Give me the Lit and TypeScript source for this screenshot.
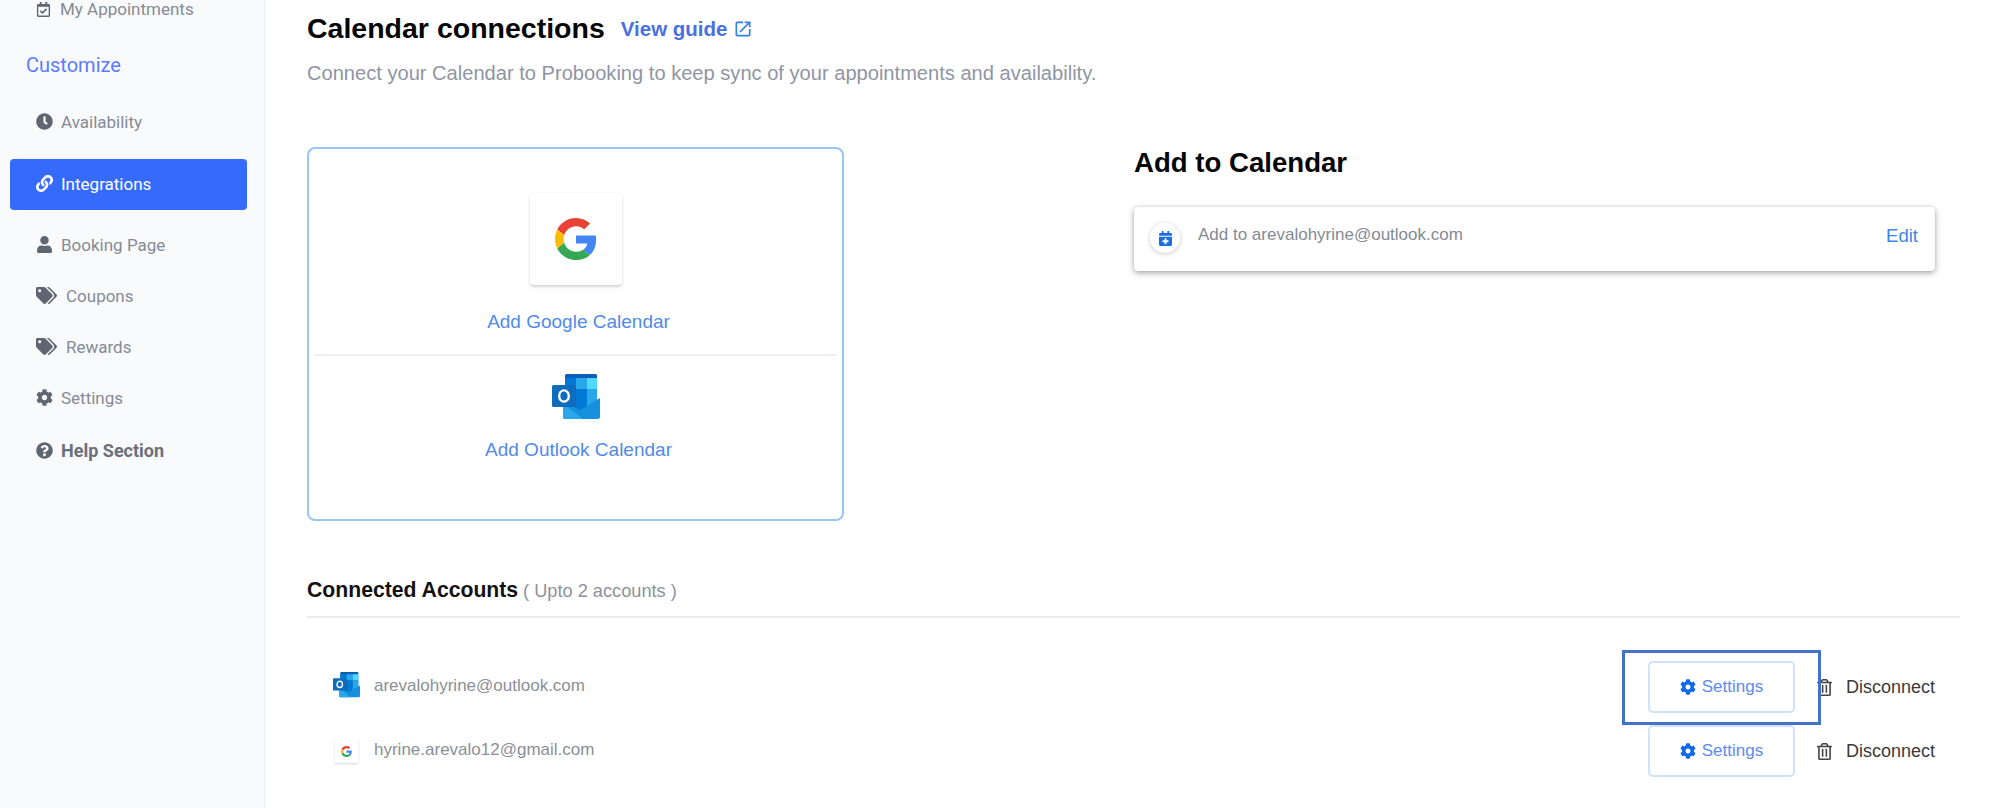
import { LitElement, html, css, svg } from "lit";
import { customElement } from "lit/decorators.js";

const fa = (vb: string, d: string, cls = "ic") =>
  html`<svg class=${cls} viewBox=${vb} fill="currentColor" aria-hidden="true"><path d=${d}></path></svg>`;

const COG = "M487.4 315.7l-42.6-24.6c4.3-23.2 4.3-47 0-70.2l42.6-24.6c4.9-2.8 7.1-8.6 5.5-14-11.1-35.6-30-67.8-54.7-94.6-3.8-4.1-10-5.1-14.8-2.3L380.8 110c-17.9-15.4-38.5-27.3-60.8-35.1V25.8c0-5.6-3.9-10.5-9.4-11.7-36.7-8.2-74.3-7.8-109.2 0-5.5 1.2-9.4 6.1-9.4 11.7V75c-22.2 7.9-42.8 19.8-60.8 35.1L88.7 85.5c-4.9-2.8-11-1.9-14.8 2.3-24.7 26.7-43.6 58.9-54.7 94.6-1.7 5.4.6 11.2 5.5 14L67.3 221c-4.3 23.2-4.3 47 0 70.2l-42.6 24.6c-4.9 2.8-7.1 8.6-5.5 14 11.1 35.6 30 67.8 54.7 94.6 3.8 4.1 10 5.1 14.8 2.3l42.6-24.6c17.9 15.4 38.5 27.3 60.8 35.1v49.2c0 5.6 3.9 10.5 9.4 11.7 36.7 8.2 74.3 7.8 109.2 0 5.5-1.2 9.4-6.1 9.4-11.7v-49.2c22.2-7.9 42.8-19.8 60.8-35.1l42.6 24.6c4.9 2.8 11 1.9 14.8-2.3 24.7-26.7 43.6-58.9 54.7-94.6 1.5-5.5-.7-11.3-5.6-14.1zM256 336c-44.1 0-80-35.9-80-80s35.9-80 80-80 80 35.9 80 80-35.9 80-80 80z";
const USER = "M224 256c70.7 0 128-57.3 128-128S294.7 0 224 0 96 57.3 96 128s57.3 128 128 128zm89.6 32h-16.7c-22.2 10.2-46.9 16-72.9 16s-50.6-5.8-72.9-16h-16.7C60.2 288 0 348.2 0 422.4V464c0 26.5 21.5 48 48 48h352c26.5 0 48-21.5 48-48v-41.6c0-74.2-60.2-134.4-134.4-134.4z";
const TAGS = "M497.941 225.941L286.059 14.059A48 48 0 0 0 252.118 0H48C21.49 0 0 21.49 0 48v204.118a48 48 0 0 0 14.059 33.941l211.882 211.882c18.744 18.745 49.136 18.746 67.882 0l204.118-204.118c18.745-18.745 18.745-49.137 0-67.882zM112 160c-26.51 0-48-21.49-48-48s21.49-48 48-48 48 21.49 48 48-21.49 48-48 48zm513.941 133.823L421.823 497.941c-18.745 18.745-49.137 18.745-67.882 0l-.36-.36L527.64 323.522c16.999-16.999 26.36-39.6 26.36-63.64s-9.362-46.641-26.36-63.64L331.397 0h48.721a48 48 0 0 1 33.941 14.059l211.882 211.882c18.745 18.745 18.745 49.137 0 67.882z";
const QUESTION = "M504 256c0 136.997-111.043 248-248 248S8 392.997 8 256C8 119.083 119.043 8 256 8s248 111.083 248 248zM262.655 90c-54.497 0-89.255 22.957-116.549 63.758-3.536 5.286-2.353 12.415 2.715 16.258l34.699 26.31c5.205 3.947 12.621 3.008 16.665-2.122 17.864-22.658 30.113-35.797 57.303-35.797 20.429 0 45.698 13.148 45.698 32.958 0 14.976-12.363 22.667-32.534 33.976C247.128 238.528 216 254.941 216 296v4c0 6.627 5.373 12 12 12h56c6.627 0 12-5.373 12-12v-1.333c0-28.462 83.186-29.647 83.186-106.667 0-58.002-60.165-102-116.531-102zM256 338c-25.365 0-46 20.635-46 46 0 25.364 20.635 46 46 46s46-20.636 46-46c0-25.365-20.635-46-46-46z";
const CLOCK = "M256,8C119,8,8,119,8,256S119,504,256,504,504,393,504,256,393,8,256,8Zm92.49,313h0l-20,25a16,16,0,0,1-22.49,2.5h0l-67-49.72a40,40,0,0,1-15-31.23V112a16,16,0,0,1,16-16h32a16,16,0,0,1,16,16V256l58,42.5A16,16,0,0,1,348.49,321Z";
const LINK = "M326.612 185.391c59.747 59.809 58.927 155.698.36 214.59-.11.12-.24.25-.36.37l-67.2 67.2c-59.27 59.27-155.699 59.262-214.96 0-59.27-59.26-59.27-155.7 0-214.96l37.106-37.106c9.84-9.84 26.786-3.3 27.294 10.606.648 17.722 3.826 35.527 9.69 52.721 1.986 5.822.567 12.262-3.783 16.612l-13.087 13.087c-28.026 28.026-28.905 73.66-1.155 101.96 28.024 28.579 74.086 28.749 102.325.51l67.2-67.19c28.191-28.191 28.073-73.757 0-101.83-3.701-3.694-7.429-6.564-10.341-8.569a16.037 16.037 0 0 1-6.947-12.606c-.396-10.567 3.348-21.456 11.698-29.806l21.054-21.055c5.521-5.521 14.182-6.199 20.584-1.731a152.482 152.482 0 0 1 20.522 17.197zM467.547 44.449c-59.261-59.262-155.69-59.27-214.96 0l-67.2 67.2c-.12.12-.25.25-.36.37-58.566 58.892-59.387 154.781.36 214.59a152.454 152.454 0 0 0 20.521 17.196c6.402 4.468 15.064 3.789 20.584-1.731l21.054-21.055c8.35-8.35 12.094-19.239 11.698-29.806a16.037 16.037 0 0 0-6.947-12.606c-2.912-2.005-6.64-4.875-10.341-8.569-28.073-28.073-28.191-73.639 0-101.83l67.2-67.19c28.239-28.239 74.3-28.069 102.325.51 27.75 28.3 26.872 73.934-1.155 101.96l-13.087 13.087c-4.35 4.35-5.769 10.79-3.783 16.612 5.864 17.194 9.042 34.999 9.69 52.721.509 13.906 17.454 20.446 27.294 10.606l37.106-37.106c59.271-59.259 59.271-155.699.001-214.959z";
const TRASH = "M268 416h24a12 12 0 0 0 12-12V188a12 12 0 0 0-12-12h-24a12 12 0 0 0-12 12v216a12 12 0 0 0 12 12zM432 80h-82.41l-34-56.7A48 48 0 0 0 274.41 0H173.59a48 48 0 0 0-41.16 23.3L98.41 80H16A16 16 0 0 0 0 96v16a16 16 0 0 0 16 16h16v336a48 48 0 0 0 48 48h288a48 48 0 0 0 48-48V128h16a16 16 0 0 0 16-16V96a16 16 0 0 0-16-16zM171.84 50.91A6 6 0 0 1 177 48h94a6 6 0 0 1 5.15 2.91L293.61 80H154.39zM368 464H80V128h288zm-212-48h24a12 12 0 0 0 12-12V188a12 12 0 0 0-12-12h-24a12 12 0 0 0-12 12v216a12 12 0 0 0 12 12z";
const CALPLUS = "M436 160H12c-6.6 0-12-5.4-12-12v-36c0-26.5 21.5-48 48-48h48V12c0-6.6 5.4-12 12-12h40c6.6 0 12 5.4 12 12v52h128V12c0-6.6 5.4-12 12-12h40c6.6 0 12 5.4 12 12v52h48c26.5 0 48 21.5 48 48v36c0 6.6-5.4 12-12 12zM12 192h424c6.6 0 12 5.4 12 12v260c0 26.5-21.5 48-48 48H48c-26.5 0-48-21.5-48-48V204c0-6.6 5.4-12 12-12zm316 140c0-6.6-5.4-12-12-12h-60v-60c0-6.6-5.4-12-12-12h-40c-6.6 0-12 5.4-12 12v60h-60c-6.6 0-12 5.4-12 12v40c0 6.6 5.4 12 12 12h60v60c0 6.6 5.4 12 12 12h40c6.6 0 12-5.4 12-12v-60h60c6.6 0 12-5.4 12-12v-40z";
const CALCHECK = "M400 64h-48V12c0-6.6-5.4-12-12-12h-40c-6.6 0-12 5.4-12 12v52H160V12c0-6.6-5.4-12-12-12h-40c-6.6 0-12 5.4-12 12v52H48C21.5 64 0 85.5 0 112v352c0 26.5 21.5 48 48 48h352c26.5 0 48-21.5 48-48V112c0-26.5-21.5-48-48-48zm-6 400H54c-3.3 0-6-2.7-6-6V160h352v298c0 3.3-2.7 6-6 6zm-52.849-200.65L198.842 404.519c-4.705 4.667-12.303 4.637-16.971-.068l-75.091-75.699c-4.667-4.705-4.637-12.303.068-16.971l22.719-22.536c4.705-4.667 12.303-4.637 16.97.069l44.104 44.461 111.072-110.181c4.705-4.667 12.303-4.637 16.971.068l22.536 22.718c4.667 4.705 4.636 12.303-.069 16.97z";
const EXT = "M14,3V5H17.59L7.76,14.83L9.17,16.24L19,6.41V10H21V3M19,19H5V5H12V3H5C3.89,3 3,3.9 3,5V19A2,2 0 0,0 5,21H19A2,2 0 0,0 21,19V12H19V19Z";

const googleG = (size: number) => html`<svg width=${size} height=${size} viewBox="0 0 48 48" aria-hidden="true">
  ${svg`<path fill="#EA4335" d="M24 9.5c3.54 0 6.71 1.22 9.21 3.6l6.85-6.85C35.9 2.38 30.47 0 24 0 14.62 0 6.51 5.38 2.56 13.22l7.98 6.19C12.43 13.72 17.74 9.5 24 9.5z"/>
  <path fill="#4285F4" d="M46.98 24.55c0-1.57-.15-3.09-.38-4.55H24v9.02h12.94c-.58 2.96-2.26 5.48-4.78 7.18l7.73 6c4.51-4.18 7.09-10.36 7.09-17.65z"/>
  <path fill="#FBBC05" d="M10.53 28.59c-.48-1.45-.76-2.99-.76-4.59s.27-3.14.76-4.59l-7.98-6.19C.92 16.46 0 20.12 0 24c0 3.88.92 7.54 2.56 10.78l7.97-6.19z"/>
  <path fill="#34A853" d="M24 48c6.48 0 11.93-2.13 15.89-5.81l-7.73-6c-2.15 1.45-4.92 2.3-8.16 2.3-6.26 0-11.57-4.22-13.47-9.91l-7.98 6.19C6.51 42.62 14.62 48 24 48z"/>`}
</svg>`;

const outlook = (w: number) => html`<svg width=${w} height=${(w * 45) / 48} viewBox="0 0 48 45" aria-hidden="true">
  ${svg`<rect x="13" y="0" width="32" height="36" rx="1.5" fill="#0a5fb4"/>
  <rect x="13" y="4" width="11" height="11" fill="#0078d4"/>
  <rect x="24" y="4" width="11" height="11" fill="#28a8ea"/>
  <rect x="35" y="4" width="10" height="11" fill="#50d9ff"/>
  <rect x="13" y="15" width="11" height="21" fill="#0364b8"/>
  <rect x="24" y="15" width="11" height="21" fill="#0078d4"/>
  <rect x="35" y="15" width="10" height="21" fill="#28a8ea"/>
  <path d="M11 26l17 10 20-12v19a2 2 0 0 1-2 2H13a2 2 0 0 1-2-2z" fill="#1490df"/>
  <path d="M11 43V29l20 16H13a2 2 0 0 1-2-2z" fill="#28a8ea"/>
  <rect x="0" y="11" width="24" height="22" rx="1.5" fill="#0f6cbd"/>
  <ellipse cx="12" cy="22" rx="4.8" ry="5.6" fill="none" stroke="#fff" stroke-width="2.4"/>`}
</svg>`;

const NAV = [
  { label: "Availability", vb: "0 0 512 512", d: CLOCK, cls: "gap-a" },
  { label: "Integrations", vb: "0 0 512 512", d: LINK, cls: "active" },
  { label: "Booking Page", vb: "0 0 448 512", d: USER, cls: "gap-b" },
  { label: "Coupons", vb: "0 0 640 512", d: TAGS, cls: "tag" },
  { label: "Rewards", vb: "0 0 640 512", d: TAGS, cls: "tag" },
  { label: "Settings", vb: "0 0 512 512", d: COG, cls: "" },
  { label: "Help Section", vb: "0 0 512 512", d: QUESTION, cls: "help" },
];

@customElement("app-root")
export class AppRoot extends LitElement {
  static styles = css`
    :host {
      display: block;
      width: 2000px;
      height: 808px;
      overflow: hidden;
      background: #fff;
      font-family: "Liberation Sans", Arial, sans-serif;
    }
    .page { display: flex; height: 808px; }

    .side {
      width: 265px;
      flex: none;
      box-sizing: border-box;
      background: #f9fafc;
      border-right: 1px solid #eceef2;
      font-family: Roboto, sans-serif;
      padding: 0 0 0 10px;
      display: flex;
      flex-direction: column;
      color: #858b96;
      font-size: 17px;
    }
    .item {
      display: flex;
      align-items: center;
      height: 51px;
      width: 237px;
      box-sizing: border-box;
      padding: 0 0 2px 26px;
      gap: 8px;
    }
    .item .ic { width: 17px; height: 17px; color: #5f6672; flex: none; }
    .item.top { height: 18px; padding-bottom: 0; font-size: 17px; gap: 9px; }
    .item.top .ic { width: 15px; height: 15px; }
    .customize {
      color: #5b7cfb;
      font-size: 20px;
      line-height: 24px;
      margin: 35px 0 0 16px;
    }
    .item.gap-a { margin-top: 20px; margin-bottom: 11px; }
    .item.active {
      background: #356bfd;
      color: #fff;
      border-radius: 4px;
    }
    .item.active .ic { color: #fff; }
    .item.gap-b { margin-top: 10px; }
    .item.tag { gap: 9px; }
    .item.tag .ic { width: 21px; height: 17px; }
    .item.help { font-weight: 700; font-size: 18px; color: #6a707b; margin-top: 2px; }

    .main { flex: 1; min-width: 0; padding: 0 40px 0 42px; }
    .head { display: flex; align-items: center; gap: 16px; padding-top: 10px; }
    h1 { margin: 0; font-size: 28.5px; line-height: 36px; font-weight: 700; color: #050505; }
    .guide { display: inline-flex; align-items: center; gap: 6px; color: #4a6fe0; font-size: 20.5px; font-weight: 700; padding-top: 1px; }
    .guide .ic { width: 20px; height: 20px; color: #2f80ed; }
    .sub { margin: 14px 0 0; font-size: 20.1px; line-height: 26px; color: #8f95a3; }

    .cols { display: flex; margin-top: 61px; }
    .card {
      width: 537px;
      height: 374px;
      box-sizing: border-box;
      flex: none;
      border: 2px solid #9ac5f4;
      border-radius: 8px;
      padding: 0 5px;
      display: flex;
      flex-direction: column;
    }
    .opt { display: flex; flex-direction: column; align-items: center; color: #4f8be8; font-size: 19px; line-height: 22px; }
    .opt span { margin-left: 6px; }
    .opt.g { height: 207px; padding-top: 44px; box-sizing: border-box; border-bottom: 2px solid #f0f0f0; }
    .gbox {
      width: 92px;
      height: 92px;
      display: flex;
      align-items: center;
      justify-content: center;
      border-radius: 4px;
      box-shadow: 0 2px 3px rgba(0, 0, 0, 0.16), 0 0 3px rgba(0, 0, 0, 0.05);
      margin-bottom: 26px;
    }
    .opt.o { padding-top: 18px; }
    .opt.o svg { margin-bottom: 20px; }

    .right { margin-left: 290px; flex: 1; min-width: 0; padding-right: 25px; }
    h2 { margin: 0; font-size: 27.6px; line-height: 30px; font-weight: 700; color: #050505; padding-top: 1px; }
    .addcard {
      margin-top: 29px;
      height: 64px;
      border-radius: 4px;
      box-shadow: 0 2px 6px rgba(0, 0, 0, 0.35), 0 0 2px rgba(0, 0, 0, 0.12);
      display: flex;
      align-items: center;
      padding: 0 17px 0 16px;
      background: #fff;
    }
    .round {
      width: 30px;
      height: 30px;
      border-radius: 50%;
      box-shadow: 0 1px 5px rgba(0, 0, 0, 0.22);
      display: flex;
      align-items: center;
      justify-content: center;
      margin: -2px 18px 0 0;
      flex: none;
    }
    .round .ic { width: 13px; height: 15px; color: #1a6fe0; }
    .addtext { flex: 1; font-size: 17px; color: #858a94; margin-top: -8px; }
    .edit { color: #3d87ea; font-size: 18.5px; margin-top: -6px; }

    .conn { margin-top: 57px; border-bottom: 2px solid #ececec; padding-bottom: 12px; line-height: 24px; }
    .conn b { font-size: 21.2px; color: #111; }
    .conn span { font-size: 18.2px; color: #8d929c; margin-left: 5px; }
    .rows { margin-top: 43px; display: flex; flex-direction: column; gap: 12px; }
    .row { display: flex; align-items: center; height: 52px; padding: 0 25px 0 25px; }
    .rowicon { width: 28px; display: flex; justify-content: center; margin-right: 14px; }
    .rowicon.ol { margin-top: -4px; }
    .gsmall {
      width: 23px;
      height: 23px;
      display: flex;
      align-items: center;
      justify-content: center;
      box-shadow: 0 1px 2px rgba(0, 0, 0, 0.16);
    }
    .email { flex: 1; font-size: 17px; color: #8b8f97; margin-top: -3px; }
    .btn {
      position: relative;
      width: 147px;
      height: 52px;
      box-sizing: border-box;
      border: 2px solid #cfe2fb;
      border-radius: 5px;
      display: flex;
      align-items: center;
      justify-content: center;
      gap: 6px;
      color: #5c8bf5;
      font-size: 17px;
    }
    .btn .ic { width: 16px; height: 16px; color: #0f6ae8; }
    .btn.mark::after {
      content: "";
      position: absolute;
      inset: -13px -28px -14px -28px;
      border: 3px solid #4472c4;
      pointer-events: none;
      z-index: 1;
    }
    .disc { display: flex; align-items: center; gap: 14px; margin-left: 22px; font-size: 18px; color: #3a3a3a; }
    .disc .ic { width: 15px; height: 17px; color: #444; }
  `;

  render() {
    return html`<div class="page">
      <nav class="side">
        <div class="item top">${fa("0 0 448 512", CALCHECK)}<span>My Appointments</span></div>
        <div class="customize">Customize</div>
        ${NAV.map(
          (n) => html`<div class="item ${n.cls}">${fa(n.vb, n.d)}<span>${n.label}</span></div>`
        )}
      </nav>
      <main class="main">
        <div class="head">
          <h1>Calendar connections</h1>
          <a class="guide">View guide ${fa("0 0 24 24", EXT)}</a>
        </div>
        <p class="sub">Connect your Calendar to Probooking to keep sync of your appointments and availability.</p>
        <div class="cols">
          <section class="card">
            <div class="opt g">
              <div class="gbox">${googleG(42)}</div>
              <span>Add Google Calendar</span>
            </div>
            <div class="opt o">${outlook(48)}<span>Add Outlook Calendar</span></div>
          </section>
          <section class="right">
            <h2>Add to Calendar</h2>
            <div class="addcard">
              <div class="round">${fa("0 0 448 512", CALPLUS)}</div>
              <div class="addtext">Add to arevalohyrine@outlook.com</div>
              <div class="edit">Edit</div>
            </div>
          </section>
        </div>
        <div class="conn"><b>Connected Accounts</b><span>( Upto 2 accounts )</span></div>
        <div class="rows">
          <div class="row">
            <div class="rowicon ol">${outlook(27)}</div>
            <div class="email">arevalohyrine@outlook.com</div>
            <div class="btn mark">${fa("0 0 512 512", COG)}Settings</div>
            <div class="disc">${fa("0 0 448 512", TRASH)}Disconnect</div>
          </div>
          <div class="row">
            <div class="rowicon"><div class="gsmall">${googleG(11)}</div></div>
            <div class="email">hyrine.arevalo12@gmail.com</div>
            <div class="btn">${fa("0 0 512 512", COG)}Settings</div>
            <div class="disc">${fa("0 0 448 512", TRASH)}Disconnect</div>
          </div>
        </div>
      </main>
    </div>`;
  }
}
